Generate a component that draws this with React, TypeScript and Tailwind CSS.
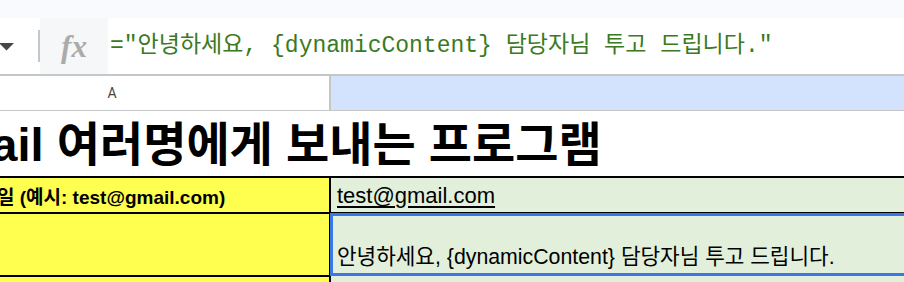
import React from 'react';

const App = () => {
  return (
    <div className="w-[904px] h-[282px] overflow-hidden bg-white font-['Liberation_Sans','Noto_Sans_CJK_KR',sans-serif] text-black">
      {/* toolbar edge */}
      <div className="h-[18px] bg-[#f8fafd]" />

      {/* formula bar */}
      <div className="flex h-[58px] items-stretch border-b-2 border-[#c4c7c5] bg-white">
        <div className="flex w-[38px] items-center">
          <svg width="15" height="8" viewBox="0 0 15 8" className="-ml-[1px] mt-[2px]">
            <path d="M0 0 L15 0 L7.5 7.5 Z" fill="#444746" />
          </svg>
        </div>
        <div className="my-[12px] w-[2px] bg-[#c4c7c5]" />
        <div className="flex w-[68px] items-center justify-center bg-[#f6f7f8]">
          <span className="font-['Liberation_Serif',serif] text-[31px] font-bold italic leading-none text-[#ababab]">fx</span>
        </div>
        <div className="flex items-center pl-[2px]">
          <span className="whitespace-pre font-['Liberation_Mono','Noto_Sans_CJK_KR',monospace] text-[23px] text-[#3a7a20]">
            ="안녕하세요, {'{'}dynamicContent{'}'} 담당자님 투고 드립니다."
          </span>
        </div>
      </div>

      {/* sheet grid, column A begins off screen */}
      <div className="-ml-[105px] w-[1009px]">
        {/* column headers */}
        <div className="flex h-[35px] border-b border-[#c4c7c5]">
          <div className="flex w-[436px] items-center justify-center border-r-2 border-[#c4c7c5] bg-white font-['Roboto',sans-serif] text-[14px] text-[#444746]">
            A
          </div>
          <div className="flex-1 bg-[#d3e3fd]" />
        </div>

        {/* title row */}
        <div className="flex h-[67px] items-center overflow-hidden border-b-2 border-black bg-white">
          <span className="ml-[18px] mt-[2px] whitespace-nowrap text-[47px] font-bold leading-none">
            Gmail 여러명에게 보내는 프로그램
          </span>
        </div>

        {/* email row */}
        <div className="flex h-[36px]">
          <div className="flex w-[436px] items-end overflow-hidden border-r-2 border-b-2 border-black bg-[#ffff50] pb-[5px]">
            <span className="ml-[67px] whitespace-nowrap text-[19px] font-bold leading-none">
              이메일 (예시: test@gmail.com)
            </span>
          </div>
          <div className="flex flex-1 items-end border-b-2 border-black bg-[#e2efda] pb-[5px] pl-[6px]">
            <span className="whitespace-nowrap text-[22px] leading-none underline underline-offset-[3px]">test@gmail.com</span>
          </div>
        </div>

        {/* message row */}
        <div className="flex h-[63px]">
          <div className="w-[436px] border-r-2 border-b-2 border-black bg-[#ffff50]" />
          <div className="relative flex flex-1 items-end bg-[#e2efda] pb-[9px] pl-[6px]">
            <span className="whitespace-nowrap text-[21.3px] leading-none">
              안녕하세요, {'{'}dynamicContent{'}'} 담당자님 투고 드립니다.
            </span>
            <div className="pointer-events-none absolute -top-px -left-px bottom-px -right-[10px] border-[3px] border-[#3b78e7]" />
          </div>
        </div>

        {/* next row */}
        <div className="flex h-[20px]">
          <div className="w-[436px] border-r-2 border-black bg-[#ffff50]" />
          <div className="flex-1 bg-[#e2efda]" />
        </div>
      </div>
    </div>
  );
};

export default App;
